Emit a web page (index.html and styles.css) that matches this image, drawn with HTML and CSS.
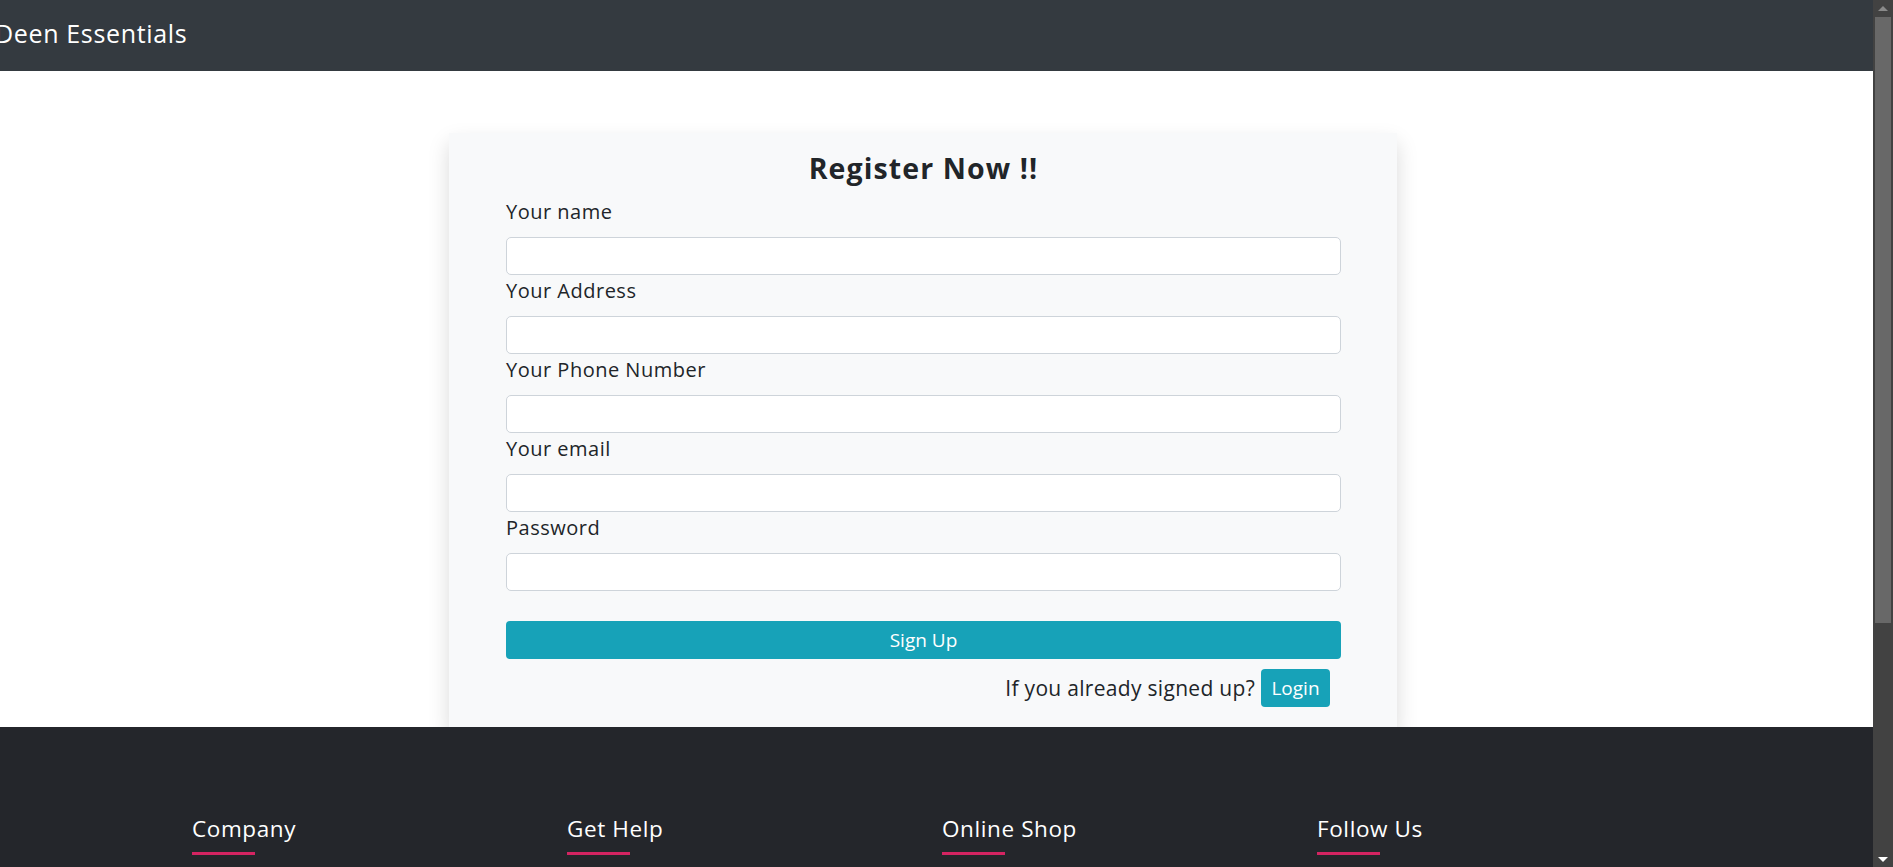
FILE: index.html
```html
<!DOCTYPE html>
<html lang="en">
<head>
<meta charset="utf-8">
<title>Deen Essentials - Register</title>
<link rel="stylesheet" href="styles.css">
</head>
<body>
<nav class="navbar">
  <span class="brand">Deen Essentials</span>
</nav>

<main class="main">
  <div class="card">
    <h3 class="card-title">Register Now !!</h3>
    <form class="form">
      <label class="label">Your name</label>
      <input class="input" type="text">
      <label class="label">Your Address</label>
      <input class="input" type="text">
      <label class="label">Your Phone Number</label>
      <input class="input" type="text">
      <label class="label">Your email</label>
      <input class="input" type="email">
      <label class="label">Password</label>
      <input class="input" type="password">
      <button class="btn-signup" type="button">Sign Up</button>
      <div class="login-row">
        <span class="login-text">If you already signed up?</span>
        <button class="btn-login" type="button">Login</button>
      </div>
    </form>
  </div>
</main>

<footer class="footer">
  <div class="container">
    <div class="footer-col"><h4 class="footer-title">Company</h4></div>
    <div class="footer-col"><h4 class="footer-title">Get Help</h4></div>
    <div class="footer-col"><h4 class="footer-title">Online Shop</h4></div>
    <div class="footer-col"><h4 class="footer-title">Follow Us</h4></div>
  </div>
</footer>

<div class="scrollbar">
  <div class="sb-arrow sb-up"></div>
  <div class="sb-thumb"></div>
  <div class="sb-arrow sb-down"></div>
</div>
</body>
</html>
```
FILE: styles.css
```css
html {
  overflow: hidden;
}
body {
  margin: 0;
  width: 1873px;
  height: 867px;
  overflow: hidden;
  font-family: "Open Sans", "Liberation Sans", sans-serif;
  color: #212529;
  background: #ffffff;
}

.navbar {
  box-sizing: border-box;
  height: 71px;
  padding-top: 15px;
  background: #343a40;
}
.brand {
  display: block;
  margin-left: -5px;
  font-size: 25px;
  line-height: 37px;
  letter-spacing: 0.65px;
  color: #ffffff;
}

.main {
  padding: 62px 27px 0 0;
}
.card {
  box-sizing: border-box;
  width: 948px;
  margin: 0 auto;
  padding: 18px 56px 20px 57px;
  background: #f8f9fa;
  box-shadow: 0 10px 20px rgba(0, 0, 0, 0.15);
}
.card-title {
  margin: 0 0 11px;
  font-size: 28.5px;
  line-height: 34px;
  font-weight: 700;
  letter-spacing: 1.1px;
  text-align: center;
}
.form {
  display: flex;
  flex-direction: column;
}
.label {
  display: block;
  padding-top: 1px;
  font-size: 20px;
  line-height: 29px;
  letter-spacing: 0.5px;
  margin-bottom: 11px;
}
.input {
  box-sizing: border-box;
  height: 38px;
  width: 100%;
  margin: 0;
  border: 1px solid #ced4da;
  border-radius: 5px;
  background: #ffffff;
}
.btn-signup {
  margin-top: 30px;
  height: 38px;
  border: 0;
  border-radius: 4px;
  background: #17a2b8;
  color: #ffffff;
  font-family: inherit;
  font-size: 19px;
}
.login-row {
  display: flex;
  justify-content: flex-end;
  align-items: center;
  gap: 6px;
  margin-top: 10px;
  padding-right: 11px;
}
.login-text {
  font-size: 21px;
  letter-spacing: 0.3px;
}
.btn-login {
  height: 38px;
  width: 69px;
  padding: 0;
  border: 0;
  border-radius: 4px;
  background: #17a2b8;
  color: #ffffff;
  font-family: inherit;
  font-size: 19px;
}

.footer {
  height: 200px;
  padding: 88px 27px 0 0;
  background: #24262b;
}
.container {
  display: flex;
  width: 1500px;
  margin: 0 auto;
}
.footer-col {
  box-sizing: border-box;
  width: 25%;
  padding: 0 19px;
}
.footer-title {
  margin: 0;
  font-size: 22.5px;
  line-height: 27px;
  font-weight: 500;
  letter-spacing: 0.6px;
  color: #ffffff;
}
.footer-title::after {
  content: "";
  display: block;
  width: 63px;
  height: 2.5px;
  margin-top: 10px;
  background: #d42462;
}

.scrollbar {
  position: fixed;
  top: 0;
  right: 0;
  width: 20px;
  height: 867px;
  background: #424242;
  display: flex;
  flex-direction: column;
  align-items: center;
}
.sb-arrow {
  width: 0;
  height: 0;
  border-left: 5px solid transparent;
  border-right: 5px solid transparent;
}
.sb-up {
  margin-top: 6px;
  border-bottom: 5px solid #8a8a8a;
}
.sb-thumb {
  width: 16px;
  margin-top: 6px;
  height: 606px;
  background: #686868;
}
.sb-down {
  margin-top: auto;
  margin-bottom: 5px;
  border-top: 5px solid #ffffff;
}
```
